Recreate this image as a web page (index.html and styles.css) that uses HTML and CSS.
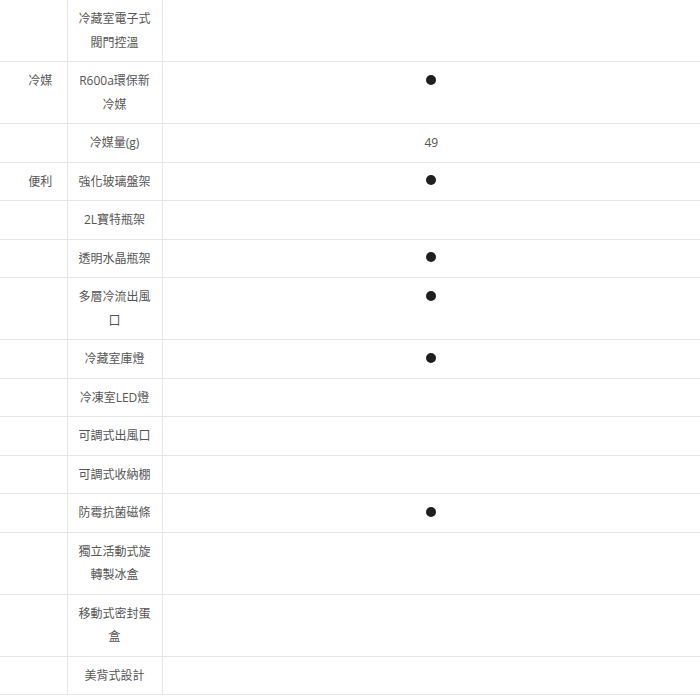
FILE: index.html
```html
<!DOCTYPE html>
<html lang="zh-Hant">
<head>
<meta charset="utf-8">
<link rel="stylesheet" href="styles.css">
</head>
<body>
<table class="spec">
  <colgroup>
    <col class="c-cat">
    <col class="c-name">
    <col class="c-val">
  </colgroup>
  <tbody>
    <tr class="first"><td class="cat"></td><td class="name">冷藏室電子式閥門控溫</td><td class="val"></td></tr>
    <tr><td class="cat">冷媒</td><td class="name">R600a環保新冷媒</td><td class="val"><span class="dot"></span></td></tr>
    <tr><td class="cat"></td><td class="name">冷媒量(g)</td><td class="val">49</td></tr>
    <tr><td class="cat">便利</td><td class="name">強化玻璃盤架</td><td class="val"><span class="dot"></span></td></tr>
    <tr><td class="cat"></td><td class="name">2L寶特瓶架</td><td class="val"></td></tr>
    <tr><td class="cat"></td><td class="name">透明水晶瓶架</td><td class="val"><span class="dot"></span></td></tr>
    <tr><td class="cat"></td><td class="name">多層冷流出風口</td><td class="val"><span class="dot"></span></td></tr>
    <tr><td class="cat"></td><td class="name">冷藏室庫燈</td><td class="val"><span class="dot"></span></td></tr>
    <tr><td class="cat"></td><td class="name">冷凍室LED燈</td><td class="val"></td></tr>
    <tr><td class="cat"></td><td class="name">可調式出風口</td><td class="val"></td></tr>
    <tr><td class="cat"></td><td class="name">可調式收納棚</td><td class="val"></td></tr>
    <tr><td class="cat"></td><td class="name">防霉抗菌磁條</td><td class="val"><span class="dot"></span></td></tr>
    <tr><td class="cat"></td><td class="name">獨立活動式旋轉製冰盒</td><td class="val"></td></tr>
    <tr><td class="cat"></td><td class="name">移動式密封蛋盒</td><td class="val"></td></tr>
    <tr><td class="cat"></td><td class="name">美背式設計</td><td class="val"></td></tr>
  </tbody>
</table>
</body>
</html>
```

FILE: styles.css
```css
html, body {
  margin: 0;
  padding: 0;
  background: #ffffff;
}

body {
  font-family: "Open Sans", "Noto Sans CJK TC", sans-serif;
  font-size: 12px;
  color: #555555;
}

.spec {
  width: 700px;
  table-layout: fixed;
  border-collapse: collapse;
}

.c-cat { width: 67px; }
.c-name { width: 95px; }

.spec td {
  padding: 7px 8px;
  line-height: 23.5px;
  vertical-align: top;
  text-align: center;
  border-bottom: 1px solid #e6e6e6;
}

.spec td.cat {
  padding-left: 14px;
  padding-right: 0;
  border-right: 1px solid #e6e6e6;
}

.spec td.name {
  border-right: 1px solid #e6e6e6;
}

.dot {
  display: inline-block;
  width: 10px;
  height: 10px;
  border-radius: 50%;
  background: #1f1f1f;
  vertical-align: middle;
  position: relative;
  top: -2px;
}
```
